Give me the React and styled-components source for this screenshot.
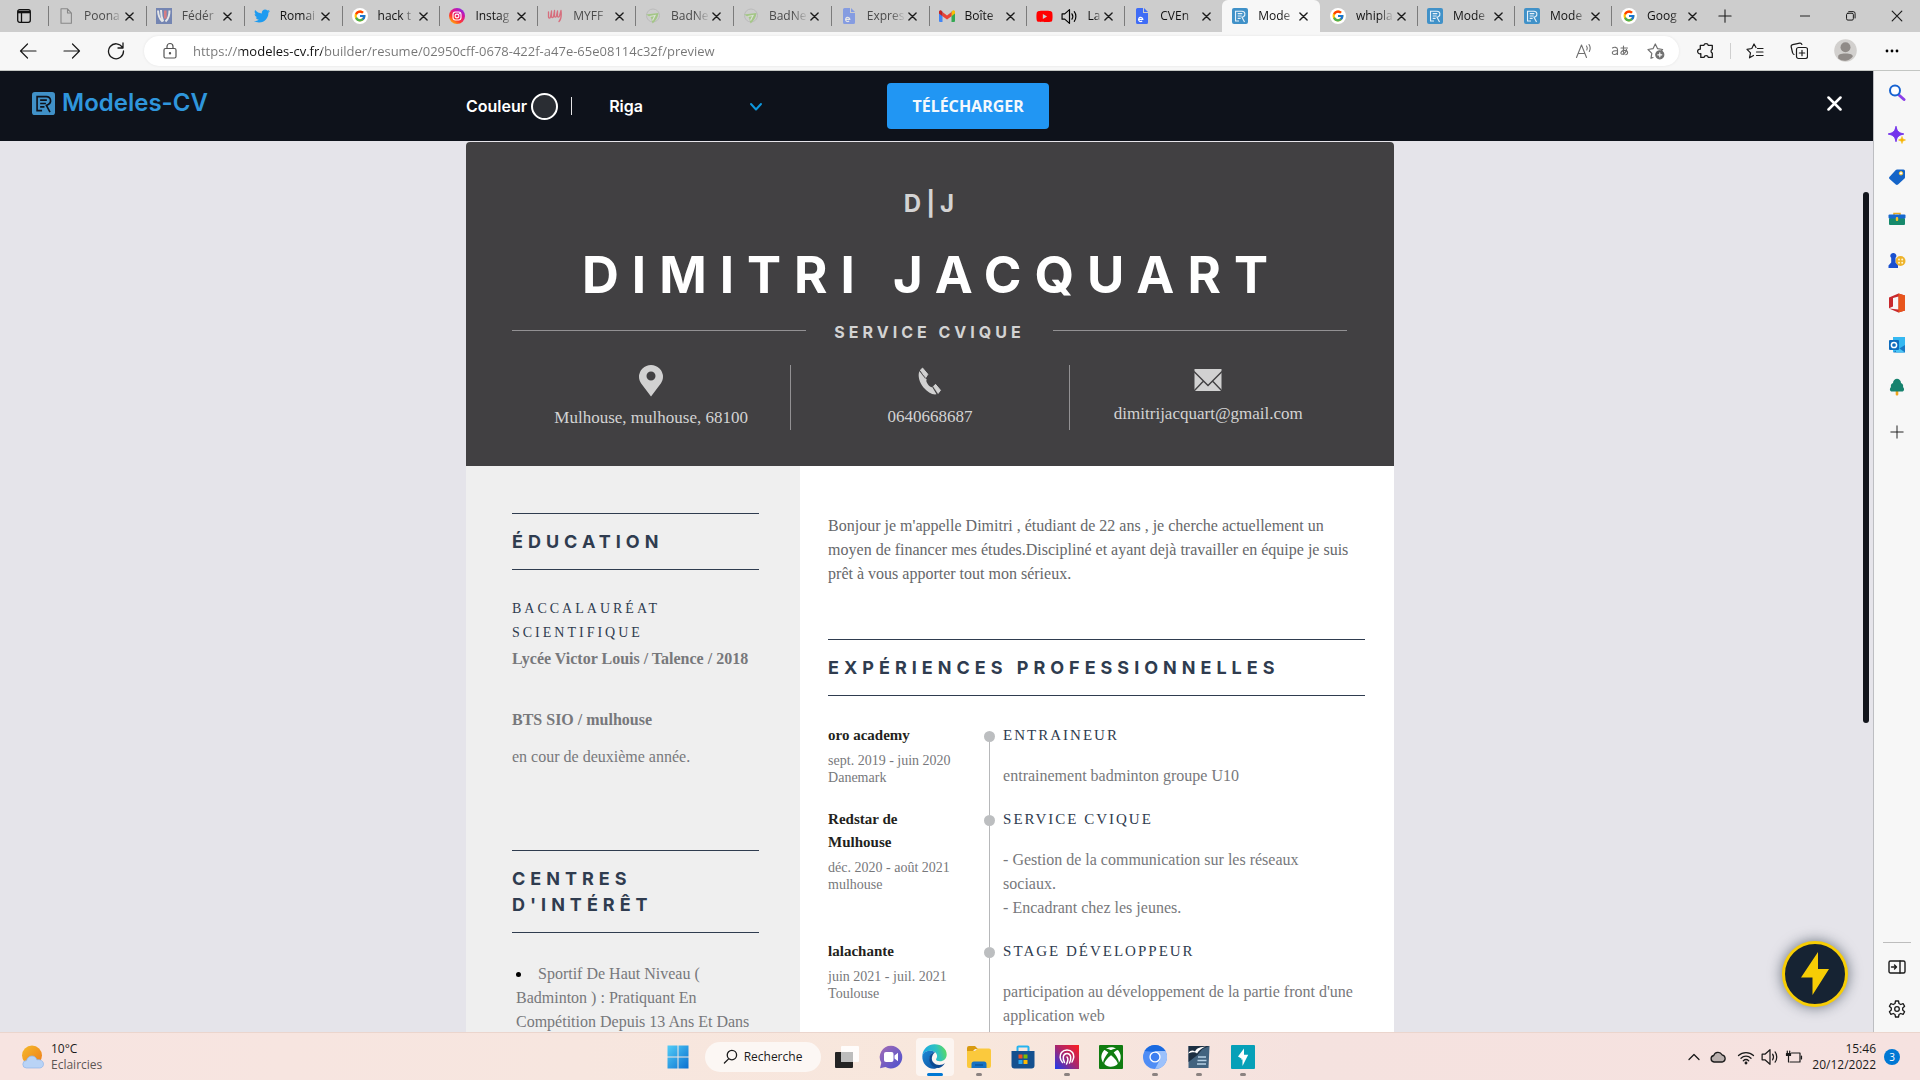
import React from "react";
import styled, { createGlobalStyle, css } from "styled-components";
import { FcGoogle } from "react-icons/fc";
import { FaTwitter, FaYoutube, FaXbox } from "react-icons/fa";

const ui = `"Open Sans", "Noto Sans", sans-serif`;
const display = `Inter, "Liberation Sans", sans-serif`;
const serif = `"Liberation Serif", serif`;
const navy = "#2f3c4f";

const GlobalStyle = createGlobalStyle`
  * { box-sizing: border-box; }
  html, body, #root { height: 100%; }
  body { margin: 0; overflow: hidden; font-family: ${ui}; }
  h1, h2, h3, h4, p, ul { margin: 0; padding: 0; font-weight: inherit; font-size: inherit; }
  button { border: 0; padding: 0; background: none; color: inherit; font: inherit; cursor: pointer; }
  svg { display: block; flex: none; }
`;

const Screen = styled.div`
  display: flex;
  flex-direction: column;
  height: 100vh;
  background: #f7f7f7;
`;

/* ---------- tab strip ---------- */

const TabStrip = styled.div`
  display: flex;
  flex: none;
  height: 32px;
  background: #cdcdcd;
`;

const TabActions = styled.div`
  display: flex;
  flex: none;
  align-items: center;
  justify-content: center;
  width: 48px;
`;

const TabList = styled.div`
  display: flex;
  flex: 1;
  min-width: 0;
`;

const TabItem = styled.div`
  display: flex;
  flex: ${(p) => (p.$recent ? 97 : 98)} 1 0;
  min-width: 0;
  align-items: center;
  padding: 0 9px 0 10px;
  position: relative;
  ${(p) =>
    p.$active
      ? css`
          background: #f7f7f7;
          border-radius: 6px 6px 0 0;
        `
      : css`
          &::before {
            content: "";
            position: absolute;
            left: 0;
            top: 6px;
            width: 1px;
            height: 20px;
            background: ${p.$plain ? "transparent" : "#7b7b7b"};
          }
        `}
`;

const TabIcon = styled.span`
  display: grid;
  place-items: center;
  flex: none;
  width: 16px;
  height: 16px;
  opacity: ${(p) => (p.$faded ? 0.5 : 1)};
`;

const TabSound = styled.span`
  flex: none;
  margin-left: 9px;
`;

const TabTitle = styled.span`
  flex: 1;
  min-width: 0;
  margin-left: ${(p) => (p.$sound ? 9 : 10)}px;
  overflow: hidden;
  white-space: nowrap;
  font-size: 12px;
  line-height: 18px;
  color: ${(p) => (p.$faded ? "#4a4a4a" : "#111")};
  mask-image: linear-gradient(90deg, #000 60%, transparent 100%);
`;

const IconButton = styled.button`
  display: grid;
  place-items: center;
  flex: none;
  width: ${(p) => p.$w || 16}px;
  height: ${(p) => p.$h || 16}px;
  color: ${(p) => p.$color || "#1b1b1b"};
`;

const WindowControls = styled.div`
  display: flex;
  flex: none;
  align-items: stretch;
  width: 212px;
`;

const ControlSpacer = styled.div`
  flex: 1;
`;

/* ---------- toolbar ---------- */

const Toolbar = styled.div`
  display: flex;
  flex: none;
  align-items: center;
  height: 39px;
  padding: 0 5px 1px 6px;
  border-bottom: 1px solid #c3c6c3;
  background: #f7f7f7;
`;

const NavButtons = styled.div`
  display: flex;
  flex: none;
  width: 138px;
`;

const AddressBar = styled.div`
  display: flex;
  flex: 1;
  align-items: center;
  min-width: 0;
  height: 30px;
  padding: 0 5px 0 17px;
  border-radius: 15px;
  background: #fff;
  box-shadow: 0 0 3px rgba(0, 0, 0, 0.08);
`;

const AddressInput = styled.input`
  flex: 1;
  min-width: 0;
  height: 26px;
  margin-left: 14px;
  padding: 0;
  border: 0;
  outline: 0;
  font-family: ${ui};
  font-size: 13px;
  color: transparent;
  caret-color: #111;
  background: linear-gradient(90deg, #757575 47px, #111 47px, #111 129px, #757575 129px);
  background-clip: text;
`;

const ToolbarActions = styled.div`
  display: flex;
  flex: none;
  align-items: center;
  padding-left: 5px;
`;

const ToolbarDivider = styled.span`
  width: 1px;
  height: 16px;
  margin: 0 2px;
  background: #cfcfcf;
`;

/* ---------- page ---------- */

const Middle = styled.div`
  display: flex;
  flex: 1;
  min-height: 0;
`;

const Page = styled.main`
  position: relative;
  display: flex;
  flex: 1;
  flex-direction: column;
  min-width: 0;
  background: #e5e4ea;
`;

const AppHeader = styled.header`
  display: grid;
  grid-template-columns: 1fr minmax(0, 928px) 1fr;
  align-items: center;
  flex: none;
  height: 70px;
  padding-right: 13px;
  background: #0e121b;
  color: #fff;
  font-family: ${display};
`;

const Brand = styled.a`
  display: flex;
  align-items: center;
  gap: 7px;
  padding: 0 0 6px 32px;
  color: #2f96dc;
  font-size: 24px;
  font-weight: 600;
  line-height: 30px;
  text-decoration: none;
`;

const Controls = styled.div`
  display: flex;
  align-items: center;
  font-size: 16px;
  font-weight: 600;
  line-height: 20px;
`;

const ColorButton = styled.button`
  display: flex;
  align-items: center;
  gap: 4px;
`;

const Swatch = styled.span`
  width: 27px;
  height: 27px;
  border: 2px solid #fff;
  border-radius: 50%;
  background: #2a2d33;
`;

const ControlDivider = styled.span`
  width: 1px;
  height: 18px;
  margin: 0 37px 0 13px;
  background: #e4e4e6;
`;

const SelectBox = styled.label`
  position: relative;
  display: block;
  width: 154px;

  svg {
    position: absolute;
    right: 0;
    top: 4px;
    pointer-events: none;
  }
`;

const TemplateSelect = styled.select`
  width: 100%;
  padding: 0;
  border: 0;
  appearance: none;
  background: transparent;
  color: #fff;
  font: inherit;
`;

const DownloadButton = styled.button`
  width: 162px;
  height: 46px;
  margin-left: 124px;
  border-radius: 4px;
  background: #2196f3;
  color: #f4f8fc;
  font-family: "Noto Sans", sans-serif;
  font-size: 16px;
  font-weight: 700;
`;

const CloseBox = styled.div`
  display: flex;
  justify-content: flex-end;
  padding: 0 18px 6px 0;
`;

const Scroller = styled.div`
  display: flex;
  flex: 1;
  min-height: 0;
`;

const Canvas = styled.div`
  flex: 1;
  min-width: 0;
  padding-top: 1px;
  overflow: hidden;
`;

const ScrollTrack = styled.div`
  flex: none;
  width: 13px;
  padding: 51px 0 0 3px;
`;

const ScrollThumb = styled.div`
  width: 6px;
  height: 64%;
  min-height: 40px;
  max-height: 531px;
  border-radius: 3px;
  background: #12151c;
`;

const BoltButton = styled.button`
  position: absolute;
  right: 25px;
  bottom: 25px;
  display: grid;
  place-items: center;
  width: 66px;
  height: 66px;
  border: 3px solid #f7cd05;
  border-radius: 50%;
  background: #162333;
  box-shadow: 0 0 14px rgba(22, 35, 51, 0.6);
`;

/* ---------- resume ---------- */

const Resume = styled.article`
  max-width: 928px;
  margin: 0 auto;
  border-radius: 4px 4px 0 0;
  overflow: hidden;
  background: #fff;
`;

const ResumeHeader = styled.header`
  padding: 47px 47px 37px 46px;
  background: #414042;
  color: #d3d3d3;
  text-align: center;
`;

const Initials = styled.p`
  padding-left: 4px;
  font-family: ${display};
  font-size: 24px;
  font-weight: 700;
  line-height: 30px;
  letter-spacing: 5px;
`;

const Name = styled.h1`
  margin-top: 25px;
  padding-left: 4px;
  color: #fff;
  font-family: ${display};
  font-size: 51px;
  font-weight: 700;
  line-height: 62px;
  letter-spacing: 13px;
`;

const RoleRow = styled.div`
  display: flex;
  align-items: center;
  gap: 28px;
  margin-top: 12px;

  &::before,
  &::after {
    content: "";
    flex: 1;
    height: 1px;
    background: #929193;
  }
`;

const Role = styled.h2`
  padding-top: 4px;
  font-family: ${display};
  font-size: 16px;
  font-weight: 700;
  line-height: 20px;
  letter-spacing: 4px;
`;

const Contacts = styled.div`
  display: grid;
  grid-template-columns: repeat(3, 1fr);
  height: 64px;
  margin-top: 23px;
`;

const Contact = styled.div`
  display: flex;
  flex-direction: column;
  align-items: center;
  gap: 9px;
  font-family: ${serif};
  font-size: 17px;
  line-height: 24px;

  & + & {
    border-left: 1px solid #929193;
  }
`;

const Columns = styled.div`
  display: grid;
  grid-template-columns: 36% 1fr;
`;

const Aside = styled.div`
  padding: 47px 41px 47px 46px;
  background: #efefef;
  color: #77787b;
  font-family: ${serif};
  font-size: 16px;
  line-height: 24px;
`;

const Main = styled.div`
  padding: 48px 29px 47px 28px;
  color: #77787b;
  font-family: ${serif};
  font-size: 16px;
  line-height: 24px;
`;

const SectionTitle = styled.h2`
  padding: 15px 0 14px;
  border-top: 1px solid ${navy};
  border-bottom: 1px solid ${navy};
  color: ${navy};
  font-family: ${display};
  font-size: 18px;
  font-weight: 700;
  line-height: 26px;
  letter-spacing: 5px;
`;

const Degree = styled.h3`
  margin: 27px 0 2px;
  color: ${navy};
  font-size: 14px;
  letter-spacing: 3px;
`;

const School = styled.h4`
  margin-bottom: ${(p) => p.$after}px;
  font-weight: 700;
`;

const Interests = styled.ul`
  margin-top: 29px;
  padding-left: 4px;
  list-style: disc inside;

  li::marker {
    color: #000;
  }
`;

const Education = styled.section`
  padding-bottom: 81px;
`;

const Intro = styled.p`
  margin-bottom: 53px;
  color: #66676a;
`;

const Jobs = styled.div`
  margin-top: 28px;
`;

const Job = styled.section`
  display: grid;
  grid-template-columns: 156px 11px 1fr;
`;

const JobMeta = styled.div`
  padding: 0 28px 20px 0;
  font-size: 14px;
  line-height: 17px;
`;

const Company = styled.h3`
  margin-bottom: 5px;
  color: #231f20;
  font-size: 15px;
  font-weight: 700;
  line-height: 23px;
`;

const Rail = styled.div`
  display: flex;
  flex-direction: column;
  align-items: center;
`;

const RailLine = styled.span`
  flex: ${(p) => (p.$lead ? "0 0 7px" : "1")};
  width: 1px;
  background: ${(p) => (p.$hidden ? "transparent" : "#b7b8ba")};
`;

const RailDot = styled.span`
  width: 11px;
  height: 11px;
  border-radius: 50%;
  background: #bcbec0;
`;

const JobBody = styled.div`
  padding: 0 0 20px 8px;
`;

const JobTitle = styled.h3`
  margin-bottom: 17px;
  color: ${navy};
  font-size: 15px;
  line-height: 23px;
  letter-spacing: 2px;
`;

/* ---------- browser side panel ---------- */

const SidePanel = styled.aside`
  display: flex;
  flex: none;
  flex-direction: column;
  align-items: center;
  width: 47px;
  padding: 1px 0 2px;
  border-left: 1px solid #bdbec2;
  background: #f7f7f7;
`;

const PanelDivider = styled.span`
  width: 28px;
  height: 1px;
  margin: auto 0 3px;
  background: #bdbdbd;
`;

/* ---------- taskbar ---------- */

const Taskbar = styled.footer`
  display: grid;
  grid-template-columns: 1fr auto 1fr;
  align-items: center;
  flex: none;
  height: 48px;
  border-top: 1px solid #ebd5cd;
  background: linear-gradient(90deg, #f7e4e1 0%, #f7e6df 30%, #f8e7dc 50%, #f5e2df 68%, #f6e2e0 100%);
  color: #1b1b1b;
  font-size: 12px;
  line-height: 16px;
`;

const Weather = styled.button`
  display: flex;
  align-items: center;
  gap: 7px;
  padding-left: 21px;
  text-align: left;
`;

const Muted = styled.span`
  display: block;
  color: #5c5654;
`;

const Apps = styled.div`
  display: flex;
  align-items: center;
`;

const AppCell = styled.button`
  position: relative;
  display: grid;
  place-items: center;
  width: 38px;
  height: 38px;
  margin: 0 3px;
  border-radius: 4px;
  background: ${(p) => (p.$active ? "rgba(255,255,255,0.6)" : "transparent")};

  &::after {
    content: "";
    position: absolute;
    bottom: 0;
    left: 50%;
    width: ${(p) => (p.$active ? 16 : 6)}px;
    height: 3px;
    margin-left: ${(p) => (p.$active ? -8 : -3)}px;
    border-radius: 2px;
    background: ${(p) => (p.$active ? "#0078d4" : p.$open ? "#8b8280" : "transparent")};
  }
`;

const SearchPill = styled.button`
  display: flex;
  align-items: center;
  justify-content: center;
  gap: 6px;
  width: 116px;
  height: 30px;
  margin: 0 4px 0 5px;
  border-radius: 15px;
  background: #fcf7f4;
`;

const Tray = styled.div`
  display: flex;
  align-items: center;
  justify-content: flex-end;
  gap: 6px;
  padding-right: 20px;
`;

const TrayGroup = styled.span`
  display: flex;
  gap: 6px;
  margin-right: 4px;
`;

const Clock = styled.time`
  margin-left: 3px;
  text-align: right;
`;

const Badge = styled.span`
  display: grid;
  place-items: center;
  width: 16px;
  height: 16px;
  margin-left: 2px;
  border-radius: 50%;
  background: #0078d4;
  color: #fff;
  font-size: 10px;
`;

/* ---------- drawings ---------- */

const Stroke = ({ s = 16, w = 1.2, vb = 16, children, ...rest }) => (
  <svg width={s} height={s} viewBox={`0 0 ${vb} ${vb}`} fill="none" stroke="currentColor" strokeWidth={w} strokeLinecap="round" strokeLinejoin="round" {...rest}>
    {children}
  </svg>
);

const Cross = ({ s = 8, w = 1.5 }) => (
  <Stroke s={s} w={w} vb={10}><path d="M1 1l8 8M9 1l-8 8" /></Stroke>
);

const DocIcon = () => (
  <Stroke s={16} w={1.1} stroke="#444"><path d="M3 .8h6.500L13.400 5v10.200H3zM9.500.8V5h4" /></Stroke>
);

const FedIcon = () => (
  <svg width="16" height="16" viewBox="0 0 16 16">
    <rect width="16" height="16" fill="#1d3f99" />
    <path d="M2 2.500c.2 5 1.500 8.500 4.500 11M5 2c0 5 .8 8.500 2.200 11.500M13.500 2.500c0 5-1.200 8.500-4 11" stroke="#fff" strokeWidth="2" fill="none" />
    <path d="M9.300 2.500v8" stroke="#e2303a" strokeWidth="2.600" />
  </svg>
);

const GoogleIcon = () => (
  <svg width="16" height="16" viewBox="0 0 16 16">
    <circle cx="8" cy="8" r="8" fill="#fff" />
    <g transform="translate(1.500 1.500)"><FcGoogle size={13} /></g>
  </svg>
);

const InstaIcon = () => (
  <svg width="16" height="16" viewBox="0 0 16 16">
    <defs>
      <linearGradient id="insta" x1="0.1" y1="1" x2="0.8" y2="0">
        <stop offset="0" stopColor="#ffd000" /><stop offset="0.35" stopColor="#ff3b30" />
        <stop offset="0.7" stopColor="#d9149a" /><stop offset="1" stopColor="#7a2cf3" />
      </linearGradient>
    </defs>
    <circle cx="8" cy="8" r="8" fill="url(#insta)" />
    <rect x="4" y="4" width="8" height="8" rx="2.400" fill="none" stroke="#fff" strokeWidth="1.100" />
    <circle cx="8" cy="8" r="1.900" fill="none" stroke="#fff" strokeWidth="1.100" />
    <circle cx="10.400" cy="5.600" r=".6" fill="#fff" />
  </svg>
);

const MyffIcon = () => (
  <Stroke s={16} w={1.3} stroke="#e0122f"><path d="M1.500 4v5c0 1.500 1.500 1.500 2 0l1-6v5.500c0 1.500 1.500 1.500 2 0l1-6V8c0 1.500 1.500 1.500 2 0l1-5v5c0 1.500 1.500 1.500 2 0l1.500-5.500c.5 4 0 9-2 11" /></Stroke>
);

const BadIcon = () => (
  <svg width="16" height="16" viewBox="0 0 16 16" fill="none">
    <circle cx="8" cy="7.500" r="6.500" stroke="#a8a8a8" strokeWidth="1" />
    <path d="M1 6.500c4-.5 8-1 12.500-1.500C13 9 11 13 7.500 15.500L6 9.500z" fill="#7cc142" />
    <path d="M4.500 8.500L10 7.500l-2.500 5" stroke="#e9f5df" strokeWidth="1.200" />
  </svg>
);

const EdgeDocIcon = () => (
  <svg width="16" height="16" viewBox="0 0 16 16">
    <path d="M3.500 0H9v5h5v9.500A1.500 1.500 0 0 1 12.500 16h-9A1.500 1.500 0 0 1 2 14.500v-13A1.500 1.500 0 0 1 3.500 0z" fill="#3f6cf6" />
    <path d="M10 0l4 4h-4z" fill="#3f6cf6" />
    <path d="M4.600 11.300h4.200a2.100 2.100 0 1 0-.7 1.700" stroke="#fff" strokeWidth="1.200" fill="none" />
  </svg>
);

const GmailIcon = () => (
  <svg width="16" height="16" viewBox="0 0 16 16">
    <path d="M0 3.500h3.500V14H1a1 1 0 0 1-1-1z" fill="#4285f4" />
    <path d="M12.500 3.500H16V13a1 1 0 0 1-1 1h-2.500z" fill="#34a853" />
    <path d="M12.500 4l1.200-1.500C15 1.800 16 2.600 16 4v1.500l-3.500 2.700z" fill="#fbbc04" />
    <path d="M3.500 8.200V4L8 7.400 12.500 4v4.200L8 11.600z" fill="#ea4335" />
    <path d="M0 5.500V4c0-1.400 1-2.200 2.300-1.500L3.500 4v4.200z" fill="#c5221f" />
  </svg>
);

const LogoIcon = ({ s = 16, ink = "#e6f1fa" }) => (
  <svg width={s} height={s} viewBox="0 0 24 24">
    <rect width="24" height="24" rx="3" fill="#4091c8" />
    <g fill="none" stroke={ink} strokeWidth="1.700">
      <path d="M4.500 19.500h6M5.300 20V4.800h9.700c5 0 5.800 6.500 2 8.200l-2 1 3.800 7" />
      <path d="M8.500 8.500h7M8.500 12h6M8.500 15.500h4.500" />
    </g>
  </svg>
);

const SoundIcon = ({ s = 16 }) => (
  <Stroke s={s} w={1.1}><path d="M1 5.500h2.500L8 1.500v13L3.500 10.500H1zM10.300 5.500c1 1.500 1 3.500 0 5M12.500 3.500c2 2.500 2 6.500 0 9" /></Stroke>
);

const PinIcon = () => (
  <svg width="32" height="32" viewBox="0 0 32 32">
    <path fillRule="evenodd" d="M16 0a12 12 0 0 0-12 12c0 2.500 1 4.600 2.200 6.500L16 31.500l9.800-13C27 16.600 28 14.500 28 12A12 12 0 0 0 16 0zm0 6.500a4.500 4.500 0 1 1 0 9 4.500 4.500 0 0 1 0-9z" fill="#d1d1d1" />
  </svg>
);

const PhoneIcon = () => (
  <svg width="30" height="31" viewBox="0 0 30 31">
    <path d="M4.400 6C2.500 11 4.500 17.500 8.500 22.500c4 4.600 8.500 7.500 13 6.800l-4.300-7.200c-1.200.2-2.700-.8-4.200-2.700-1.600-2.100-2.100-3.700-1.300-4.800z" fill="#d1d1d1" />
    <path d="M5.300 5.200l2.300-2.100 5.200 6.200-2 3.200zM18.300 21.600l2.200-2.300 5 6-2.500 3.200z" fill="#d1d1d1" stroke="#d1d1d1" strokeLinejoin="round" />
    <path d="M4.600 5.900l5.700 7.600M17.700 21.500l4.800 7.300" stroke="#414042" strokeWidth=".6" />
  </svg>
);

const MailIcon = () => (
  <svg width="28" height="28" viewBox="0 0 28 28">
    <rect x=".5" y="4" width="27" height="22" fill="#d1d1d1" />
    <path d="M0 6.500l14 14 14-14M0 26l9.500-10M28 26l-9.500-10" stroke="#414042" strokeWidth="1.400" fill="none" />
  </svg>
);

const SideSearch = () => (
  <svg width="18" height="18" viewBox="0 0 18 18" fill="none">
    <path d="M11.500 11.500l4.500 4" stroke="#8b3fe8" strokeWidth="3" strokeLinecap="round" />
    <circle cx="7" cy="6.500" r="5" fill="#fff" stroke="#1763d1" strokeWidth="2" />
  </svg>
);
const SideSpark = () => (
  <svg width="18" height="18" viewBox="0 0 18 18">
    <path d="M8 .3c.9 4.600 2.500 6.500 7.800 7.700C10.500 9.200 8.900 11 8 15.700 7.100 11 5.500 9.200.2 8 5.500 6.800 7.100 4.900 8 .3z" fill="#7433ec" stroke="#7433ec" strokeLinejoin="round" />
    <path d="M14 10.500c.4 2.200 1 3 3.500 3.500-2.500.5-3.100 1.300-3.500 3.500-.4-2.200-1-3-3.500-3.500 2.500-.5 3.100-1.300 3.500-3.500z" fill="#f7b500" stroke="#f7b500" strokeWidth=".6" />
  </svg>
);
const SideTag = () => (
  <svg width="18" height="18" viewBox="0 0 18 18">
    <path d="M9 1.500h6.500A1.500 1.500 0 0 1 17 3v6.200c0 .5-.2.900-.5 1.200L10 16.500c-.7.600-1.500.6-2.200 0L1.600 11c-.7-.7-.7-1.600 0-2.200L7.800 2c.3-.3.700-.5 1.200-.5z" fill="#1464c8" />
    <circle cx="13" cy="5.300" r="1.700" fill="#fff" stroke="#f7c32e" strokeWidth="1" />
  </svg>
);
const SideBox = () => (
  <svg width="18" height="18" viewBox="0 0 18 18">
    <path d="M6 5V3.500h6V5" stroke="#e8a81e" strokeWidth="1.500" fill="none" />
    <rect x="1" y="8" width="16" height="7" rx="1" fill="#16896b" />
    <rect x=".5" y="4.500" width="17" height="4" rx="1" fill="#1668cf" />
    <rect x="7.800" y="7" width="2.400" height="4" rx="1" fill="#f7c32e" />
  </svg>
);
const SideGames = () => (
  <svg width="18" height="18" viewBox="0 0 18 18">
    <circle cx="12.500" cy="9" r="5" fill="#eeb32b" />
    <g fill="#fff6cf"><circle cx="11" cy="7.500" r="1" /><circle cx="14.200" cy="7.500" r="1" /><circle cx="11" cy="10.700" r="1" /><circle cx="14.200" cy="10.700" r="1" /></g>
    <path d="M5.500 1a2.800 2.800 0 0 1 2 4.800v4.700l2.500 3V16H.5v-2.500l2.700-3V5.800A2.800 2.800 0 0 1 5.500 1z" fill="#1a50cf" />
  </svg>
);
const SideOffice = () => (
  <svg width="20" height="20" viewBox="0 0 20 20">
    <path d="M2 4.500L11.500.500 18 2.500v15L11.500 19.500 2 15.500l9.500 1V3.500L6 5v8.500l-4 1.800z" fill="#c8292d" />
    <path d="M11.500.5L18 2.500v15l-6.500 2z" fill="#e8551c" />
  </svg>
);
const SideOutlook = () => (
  <svg width="18" height="18" viewBox="0 0 18 18">
    <rect x="5" y="1" width="12" height="15" fill="#35b8f1" />
    <path d="M5 16.500L17 9v7.500z" fill="#1a79c4" /><path d="M17 16.500L8 10v6.500z" fill="#4ac5f7" />
    <rect x="1" y="4" width="10" height="10" rx="1" fill="#0f6cbd" />
    <circle cx="6" cy="9" r="2.600" fill="none" stroke="#fff" strokeWidth="1.500" />
  </svg>
);
const SideTree = () => (
  <svg width="18" height="18" viewBox="0 0 18 18">
    <rect x="7.700" y="12" width="2.600" height="5.500" rx="1" fill="#f2a51c" />
    <path d="M9 .8c2 0 4 2 4 4.200 2 1 2.500 2.500 2 4 1.800 1.700 1.300 4.500-1 4.500H4c-2.300 0-2.800-2.800-1-4.500-.5-1.500 0-3 2-4C5 2.800 7 .8 9 .8z" fill="#17826e" />
  </svg>
);

const WeatherIcon = () => (
  <svg width="23" height="24" viewBox="0 0 23 24">
    <defs><linearGradient id="sun" x1="0" y1="0" x2="1" y2="1"><stop offset="0" stopColor="#f5bb2b" /><stop offset="1" stopColor="#ee7b1a" /></linearGradient></defs>
    <circle cx="11" cy="10.500" r="10" fill="url(#sun)" />
    <path d="M5.500 23a3.700 3.700 0 0 1 0-7.400c.8-3 2.800-4.600 5.500-4.600 2.500 0 4.200 1.500 4.900 3.800 3-.7 6.600 1 6.600 4.300 0 2.500-1.800 3.900-4 3.900z" fill="#b9d3f6" stroke="#8fb4ea" strokeWidth=".7" />
  </svg>
);

const WindowsIcon = () => (
  <svg width="24" height="24" viewBox="0 0 24 24">
    <defs><linearGradient id="win" x1="0" y1="0" x2="1" y2="1"><stop offset="0" stopColor="#52cdf7" /><stop offset="1" stopColor="#0a6fd0" /></linearGradient></defs>
    <path d="M1.500.5h10v11h-10zM12.500.5h10v11h-10zM1.500 12.500h10v11h-10zM12.500 12.500h10v11h-10z" fill="url(#win)" />
  </svg>
);
const TaskViewIcon = () => (
  <svg width="24" height="24" viewBox="0 0 24 24">
    <rect x="0" y="7" width="18" height="16" rx="1" fill="#232323" />
    <rect x="6" y="1" width="18" height="16" rx="1" fill="#fff" opacity=".88" />
    <rect x="6" y="7" width="12" height="10" fill="#bdbdbd" />
  </svg>
);
const ChatIcon = () => (
  <svg width="24" height="24" viewBox="0 0 24 24">
    <defs><linearGradient id="chat" x1="0" y1="0" x2="1" y2="1"><stop offset="0" stopColor="#a46cb5" /><stop offset="1" stopColor="#4a50cf" /></linearGradient></defs>
    <path d="M12 .8a11.300 11.300 0 1 1-5.500 21.200L1 23.300l1.300-5.500A11.300 11.300 0 0 1 12 .8z" fill="url(#chat)" />
    <rect x="5" y="7" width="9.500" height="10" rx="2" fill="#fff" /><path d="M15.500 10.500l3.500-2.700v8.400l-3.500-2.700z" fill="#fff" />
  </svg>
);
const EdgeIcon = () => (
  <svg width="25" height="25" viewBox="0 0 24 24">
    <defs>
      <linearGradient id="edgeTop" x1="0" y1="0.500" x2="1" y2="0.300"><stop offset="0" stopColor="#1aa7e8" /><stop offset="0.600" stopColor="#2fc2c0" /><stop offset="1" stopColor="#5ddb5c" /></linearGradient>
      <linearGradient id="edgeLow" x1="0" y1="0" x2="1" y2="1"><stop offset="0" stopColor="#1b88d6" /><stop offset="1" stopColor="#0c4f9e" /></linearGradient>
    </defs>
    <path d="M.3 11C1 4.500 6 .3 12 .3c7 0 11.700 4.800 11.700 9.700 0 4-3 6.500-6.500 6.500-2.700 0-3.700-1-3.700-1.700 0-.8 1-1.300 1-3.300 0-2.800-2.700-5-6.500-5C4.500 6.500 1.500 8.300.3 11z" fill="url(#edgeTop)" />
    <path d="M.3 11.500C1 8.300 4.500 6.500 8 6.500c2 0 3.500.6 4.600 1.500C9.500 8.300 7.500 11 7.500 14c0 4.500 4 8 8.500 8-1.500 1-3 1.700-5 1.700C5 23.700 0 18.500.3 11.500z" fill="url(#edgeLow)" />
    <path d="M9.500 13c-.7 4 3 7.200 7 7.200 2.500 0 4.500-1 5.500-1.700-1.500 2.500-4 4.500-6 4.500-5 0-9-3.500-9-8.500 0-2.500 1.200-4.800 3.500-6 .5-.3 1.500-.4 2.100-.3C11 9 9.800 11 9.500 13z" fill="#0d4a91" />
  </svg>
);
const FolderIcon = () => (
  <svg width="24" height="24" viewBox="0 0 24 24">
    <path d="M0 3a2 2 0 0 1 2-2h6l3 3h-3L6 6H0z" fill="#d99a10" />
    <path d="M0 6h8l2.500-2.500H22a2 2 0 0 1 2 2V21a2 2 0 0 1-2 2H2a2 2 0 0 1-2-2z" fill="#fbc93d" />
    <path d="M4.500 23v-4a2.500 2.500 0 0 1 2.500-2.500h10a2.500 2.500 0 0 1 2.500 2.500v4z" fill="#1672c4" /><path d="M8 20h8" stroke="#0d4f91" strokeWidth="1.200" />
  </svg>
);
const StoreIcon = () => (
  <svg width="24" height="24" viewBox="0 0 24 24">
    <path d="M6.500 6V2.500c0-.6.400-1 1-1h9c.6 0 1 .4 1 1V6" stroke="#25b4f0" strokeWidth="2" fill="none" />
    <path d="M.5 6h23v14.500a3 3 0 0 1-3 3h-17a3 3 0 0 1-3-3z" fill="#14508f" />
    <path d="M7.500 9.500h4v4h-4z" fill="#f25022" /><path d="M12.500 9.500h4v4h-4z" fill="#7fba00" /><path d="M7.500 15h4v4h-4z" fill="#2ba7ef" /><path d="M12.500 15h4v4h-4z" fill="#ffb900" />
  </svg>
);
const FingerIcon = () => (
  <svg width="24" height="24" viewBox="0 0 24 24">
    <defs><linearGradient id="finger" x1="0" y1="1" x2="1" y2="0"><stop offset="0" stopColor="#1b3cf0" /><stop offset="0.500" stopColor="#a8266f" /><stop offset="1" stopColor="#ff1f1f" /></linearGradient></defs>
    <rect width="24" height="24" fill="url(#finger)" />
    <path d="M7.500 17.500c-3-3-3-7.500-1-10 2.800-3.500 8.500-3.300 11 0 1.500 2.200 1.500 6-.5 9.500M9.500 17.500C7.500 14 7.500 8.500 12 8.500s4.500 5.500 2.500 9.500M12 12c1.500 1.500.5 5-.5 7" stroke="#fff" strokeWidth="1.500" fill="none" strokeLinecap="round" />
  </svg>
);
const XboxIcon = () => (
  <svg width="24" height="24" viewBox="0 0 24 24">
    <rect width="24" height="24" rx="1" fill="#107c10" />
    <g transform="translate(2 2)" color="#fff"><FaXbox size={20} /></g>
  </svg>
);
const ChromiumIcon = () => (
  <svg width="24" height="24" viewBox="0 0 24 24">
    <circle cx="12" cy="12" r="12" fill="#4f8df5" />
    <path d="M1.600 6A12 12 0 0 1 22.400 6L12 7z" fill="#1a6ae0" />
    <path d="M22.400 6A12 12 0 0 1 12 24l5-9.500L12 6z" fill="#9cc1fb" />
    <circle cx="12" cy="12" r="5.600" fill="#fff" /><circle cx="12" cy="12" r="4.300" fill="#3c7ff0" />
  </svg>
);
const WriterIcon = () => (
  <svg width="24" height="24" viewBox="0 0 24 24">
    <path d="M1.500 1h21l-1 22h-20z" fill="#42637f" />
    <path d="M1.500 1h21l-7 3-5 6-9 7z" fill="#1c2f42" />
    <path d="M1 8.500c3-4 5-3 7-2 2-4 6-4.500 11-5-4.500 1.500-7 4-9 7-3-2-5-1-9 0z" fill="#fff" />
    <path d="M11 12h8M10.500 15.500h9M10 19h9" stroke="#b8d2e6" strokeWidth="1.500" />
  </svg>
);
const BurpIcon = () => (
  <svg width="24" height="24" viewBox="0 0 24 24">
    <rect width="24" height="24" rx="1" fill="#06a0b8" />
    <path d="M13 3.500v6.300h4.200L10.500 15v-1.500L7 11.500zM17.200 9.800L11.500 21v-6.500l-4-3h6z" fill="#fff" />
  </svg>
);

/* ---------- data ---------- */

const tabs = [
  { title: "Poona", icon: <DocIcon />, faded: true },
  { title: "Fédér", icon: <FedIcon />, faded: true },
  { title: "Romai", icon: <FaTwitter size={16} color="#1d9bf0" /> },
  { title: "hack t", icon: <GoogleIcon /> },
  { title: "Instag", icon: <InstaIcon /> },
  { title: "MYFF", icon: <MyffIcon />, faded: true },
  { title: "BadNe", icon: <BadIcon />, faded: true },
  { title: "BadNe", icon: <BadIcon />, faded: true },
  { title: "Expres", icon: <EdgeDocIcon />, faded: true },
  { title: "Boîte", icon: <GmailIcon /> },
  { title: "La", icon: <FaYoutube size={17} color="#f00" />, sound: true },
  { title: "CVEn", icon: <EdgeDocIcon /> },
  { title: "Mode", icon: <LogoIcon />, active: true },
  { title: "whipla", icon: <GoogleIcon />, plain: true, recent: true },
  { title: "Mode", icon: <LogoIcon />, recent: true },
  { title: "Mode", icon: <LogoIcon />, recent: true },
  { title: "Goog", icon: <GoogleIcon />, recent: true },
];

const contacts = [
  { icon: <PinIcon />, text: "Mulhouse, mulhouse, 68100" },
  { icon: <PhoneIcon />, text: "0640668687" },
  { icon: <MailIcon />, text: "dimitrijacquart@gmail.com" },
];

const jobs = [
  {
    company: "oro academy", dates: "sept. 2019 - juin 2020", place: "Danemark",
    title: "ENTRAINEUR", lines: ["entrainement badminton groupe U10"],
  },
  {
    company: "Redstar de Mulhouse", dates: "déc. 2020 - août 2021", place: "mulhouse",
    title: "SERVICE CVIQUE",
    lines: ["- Gestion de la communication sur les réseaux", "sociaux.", "- Encadrant chez les jeunes."],
  },
  {
    company: "lalachante", dates: "juin 2021 - juil. 2021", place: "Toulouse",
    title: "STAGE DÉVELOPPEUR",
    lines: ["participation au développement de la partie front d'une application web"],
  },
];

const sideTools = [
  ["Rechercher", <SideSearch />], ["Découvrir", <SideSpark />], ["Achats", <SideTag />], ["Outils", <SideBox />],
  ["Jeux", <SideGames />], ["Office", <SideOffice />], ["Outlook", <SideOutlook />], ["Arbre", <SideTree />],
];

const apps = [
  { name: "Vue des tâches", icon: <TaskViewIcon /> },
  { name: "Conversation", icon: <ChatIcon /> },
  { name: "Edge", icon: <EdgeIcon />, active: true },
  { name: "Explorateur", icon: <FolderIcon />, open: true },
  { name: "Store", icon: <StoreIcon /> },
  { name: "Empreinte", icon: <FingerIcon />, open: true },
  { name: "Xbox", icon: <XboxIcon /> },
  { name: "Chromium", icon: <ChromiumIcon />, open: true },
  { name: "Writer", icon: <WriterIcon />, open: true },
  { name: "Burp", icon: <BurpIcon />, open: true },
];

/* ---------- sections ---------- */

const BrowserChrome = () => (
  <>
    <TabStrip>
      <TabActions>
        <IconButton aria-label="Onglets">
          <svg width="14" height="14" viewBox="0 0 14 14" fill="none" stroke="#111" strokeWidth="1.300">
            <rect x=".7" y=".7" width="12.600" height="12.600" rx="2" /><path d="M1 3h12" strokeWidth="2.600" /><path d="M4.500 4v9" />
          </svg>
        </IconButton>
      </TabActions>
      <TabList>
        {tabs.map((t, i) => (
          <TabItem key={i} $active={t.active} $plain={t.plain} $recent={t.recent}>
            <TabIcon $faded={t.faded}>{t.icon}</TabIcon>
            {t.sound && <TabSound><SoundIcon s={17} /></TabSound>}
            <TabTitle $faded={t.faded} $sound={t.sound}>{t.title}</TabTitle>
            <IconButton aria-label="Fermer l'onglet" $w={14}><Cross s={9} /></IconButton>
          </TabItem>
        ))}
      </TabList>
      <WindowControls>
        <IconButton $w={34} $h={32} aria-label="Nouvel onglet"><Stroke s={14} w={1.2}><path d="M8 1v14M1 8h14" /></Stroke></IconButton>
        <ControlSpacer />
        <IconButton $w={46} $h={32} aria-label="Réduire"><Stroke s={10} w={1.5}><path d="M0 8h16" /></Stroke></IconButton>
        <IconButton $w={46} $h={32} aria-label="Restaurer">
          <Stroke s={10} w={1.1} vb={11}><rect x=".6" y="2.500" width="7.500" height="7.500" rx="1.500" /><path d="M3 .7h5a2 2 0 0 1 2 2v5" /></Stroke>
        </IconButton>
        <IconButton $w={46} $h={32} aria-label="Fermer"><Cross s={12} w={1} /></IconButton>
      </WindowControls>
    </TabStrip>
    <Toolbar>
      <NavButtons>
        <IconButton $w={44} $h={30} aria-label="Retour"><Stroke s={18} w={1.2} vb={18}><path d="M17 9H1.500M8.500 2L1.500 9l7 7" /></Stroke></IconButton>
        <IconButton $w={44} $h={30} aria-label="Suivant"><Stroke s={18} w={1.2} vb={18}><path d="M1 9h15.500M9.500 2l7 7-7 7" /></Stroke></IconButton>
        <IconButton $w={44} $h={30} aria-label="Actualiser"><Stroke s={18} w={1.3} vb={18}><path d="M15.500 5.500A7.500 7.500 0 1 0 16.500 9M16 1v5h-5" /></Stroke></IconButton>
      </NavButtons>
      <AddressBar>
        <Stroke s={18} w={1.2} vb={18} stroke="#555"><rect x="3" y="6.500" width="12" height="9.500" rx="1.500" /><path d="M6 6.500V4.500a3 3 0 0 1 6 0v2" /><circle cx="9" cy="11.300" r=".6" fill="#555" /></Stroke>
        <AddressInput aria-label="Adresse" defaultValue="https://modeles-cv.fr/builder/resume/02950cff-0678-422f-a47e-65e08114c32f/preview" />
        <IconButton $w={36} $h={30} $color="#707070" aria-label="Lire à haute voix">
          <Stroke s={18} w={1.1} vb={18}><path d="M1.500 15.500L6.500 3l5 12.500M3.200 11.500h6.600M11.500 4c1 1.300 1 2.700.3 4M14 2.500c1.500 2.300 1.500 4.700.3 7" /></Stroke>
        </IconButton>
        <IconButton $w={36} $h={30} $color="#707070" aria-label="Traduire">
          <Stroke s={18} w={1.1} vb={18}><path d="M1.500 6c1.500-1.200 5-1 5 1.500v5M6.500 8.500c-3 0-5.200.5-5.200 2.300 0 2.400 4.500 2.200 5.200-.3M10 6h6.500M12.500 4c-.3 3-.3 6 .5 8.500M15.500 7.500c-.8 3-2.800 4.700-4.500 4.700-2 0-1.300-3.800 2.500-3.800 4 0 3.800 3.800 1.200 4.300" /></Stroke>
        </IconButton>
        <IconButton $w={36} $h={30} $color="#707070" aria-label="Ajouter aux favoris">
          <Stroke s={18} w={1.2} vb={18}><path d="M6 15.500l-2 .8.800-5L1 7.500l5-.8L8.300 2l2.300 4.700 5 .8-1 1" /><circle cx="12.800" cy="12.800" r="4" fill="#707070" /><path d="M12.800 10.800v4M10.800 12.800h4" stroke="#fff" /></Stroke>
        </IconButton>
      </AddressBar>
      <ToolbarActions>
        <IconButton $w={44} $h={30} aria-label="Extensions">
          <Stroke s={18} w={1.3} vb={18}><path d="M3 4h3.500a2.300 2.300 0 0 1 4.500 0h4v4a2 2 0 0 0 0 3.700V16h-4a2.200 2.200 0 0 0-4.300 0H3.500v-3.800a2.300 2.300 0 1 1-.5-4.400z" transform="translate(.3 -.6)" /></Stroke>
        </IconButton>
        <ToolbarDivider />
        <IconButton $w={44} $h={30} aria-label="Favoris">
          <Stroke s={18} w={1.2} vb={18}><path d="M10 5.500L8 2 5.800 6.500 1 7.300l3.500 3.500-1 5L7.500 13.500M11.500 6.500H17M10.500 10H17M10.500 13.500H17" /></Stroke>
        </IconButton>
        <IconButton $w={44} $h={30} aria-label="Collections">
          <Stroke s={18} w={1.2} vb={18}><rect x="6.500" y="5.500" width="11" height="11" rx="2" /><path d="M12 8.300v5.400M9.300 11h5.400M4 12.500c-1-.3-1.300-1-1.500-2L1.200 5c-.2-1 .3-2 1.500-2.300l7-1.500c1-.2 1.800.2 2.200 1.300" /></Stroke>
        </IconButton>
        <IconButton $w={48} $h={30} aria-label="Profil">
          <svg width="23" height="23" viewBox="0 0 23 23"><circle cx="11.500" cy="11.500" r="11.300" fill="#d2d0ce" /><circle cx="11.500" cy="8.300" r="5" fill="#908b88" /><path d="M4.200 17.500c0-2 2.300-3 7.300-3s7.300 1 7.300 3a10 10 0 0 1-14.600 2z" fill="#908b88" /></svg>
        </IconButton>
        <IconButton $w={46} $h={30} aria-label="Paramètres et plus">
          <svg width="14" height="4" viewBox="0 0 14 4"><circle cx="2" cy="2" r="1.400" /><circle cx="7" cy="2" r="1.400" /><circle cx="12" cy="2" r="1.400" /></svg>
        </IconButton>
      </ToolbarActions>
    </Toolbar>
  </>
);

const ResumePreview = () => (
  <Resume>
    <ResumeHeader>
      <Initials>D|J</Initials>
      <Name>DIMITRI JACQUART</Name>
      <RoleRow><Role>SERVICE CVIQUE</Role></RoleRow>
      <Contacts>
        {contacts.map((c) => <Contact key={c.text}>{c.icon}<span>{c.text}</span></Contact>)}
      </Contacts>
    </ResumeHeader>
    <Columns>
      <Aside>
        <Education>
          <SectionTitle>ÉDUCATION</SectionTitle>
          <Degree>BACCALAURÉAT SCIENTIFIQUE</Degree>
          <School $after={37}>Lycée Victor Louis / Talence / 2018</School>
          <School $after={13}>BTS SIO / mulhouse</School>
          <p>en cour de deuxième année.</p>
        </Education>
        <section>
          <SectionTitle>CENTRES D'INTÉRÊT</SectionTitle>
          <Interests><li>Sportif De Haut Niveau ( Badminton ) : Pratiquant En Compétition Depuis 13 Ans Et Dans</li></Interests>
        </section>
      </Aside>
      <Main>
        <Intro>Bonjour je m'appelle Dimitri , étudiant de 22 ans , je cherche actuellement un moyen de financer mes études.Discipliné et ayant dejà travailler en équipe je suis prêt à vous apporter tout mon sérieux.</Intro>
        <SectionTitle>EXPÉRIENCES PROFESSIONNELLES</SectionTitle>
        <Jobs>
          {jobs.map((j, i) => (
            <Job key={j.title}>
              <JobMeta>
                <Company>{j.company}</Company>
                <p>{j.dates}</p>
                <p>{j.place}</p>
              </JobMeta>
              <Rail><RailLine $lead $hidden={i === 0} /><RailDot /><RailLine /></Rail>
              <JobBody>
                <JobTitle>{j.title}</JobTitle>
                {j.lines.map((l) => <p key={l}>{l}</p>)}
              </JobBody>
            </Job>
          ))}
        </Jobs>
      </Main>
    </Columns>
  </Resume>
);

export default function App() {
  return (
    <Screen>
      <GlobalStyle />
      <BrowserChrome />
      <Middle>
        <Page>
          <AppHeader>
            <Brand href="#accueil"><LogoIcon s={23} ink="#0e121b" />Modeles-CV</Brand>
            <Controls>
              <ColorButton>Couleur<Swatch /></ColorButton>
              <ControlDivider />
              <SelectBox>
                <TemplateSelect aria-label="Modèle" defaultValue="Riga"><option>Riga</option></TemplateSelect>
                <Stroke s={14} w={2} vb={14} stroke="#0d97dd"><path d="M2 4l5 5.500L12 4" /></Stroke>
              </SelectBox>
              <DownloadButton>TÉLÉCHARGER</DownloadButton>
            </Controls>
            <CloseBox><IconButton $color="#fff" aria-label="Fermer l'aperçu"><Cross s={15} w={1.7} /></IconButton></CloseBox>
          </AppHeader>
          <Scroller>
            <Canvas><ResumePreview /></Canvas>
            <ScrollTrack><ScrollThumb /></ScrollTrack>
          </Scroller>
          <BoltButton aria-label="Actions rapides">
            <svg width="28" height="44" viewBox="0 0 28 44"><path d="M17 0L0 25.500h11.500V43L28 17H17z" fill="#f7cd05" /></svg>
          </BoltButton>
        </Page>
        <SidePanel>
          {sideTools.map(([name, icon]) => <IconButton key={name} $w={42} $h={42} aria-label={name}>{icon}</IconButton>)}
          <IconButton $w={42} $h={48} aria-label="Ajouter"><Stroke s={14} w={1.1}><path d="M8 1v14M1 8h14" /></Stroke></IconButton>
          <PanelDivider />
          <IconButton $w={42} $h={42} aria-label="Masquer le volet">
            <Stroke s={18} w={1.4} vb={18}><rect x="1" y="3" width="16" height="12" rx="1.500" /><path d="M12 3v12M3.500 9h5M6.500 7l2 2-2 2" /></Stroke>
          </IconButton>
          <IconButton $w={42} $h={42} aria-label="Paramètres">
            <Stroke s={18} w={1.3} vb={18}><circle cx="9" cy="9" r="2.300" /><path d="M7.500 1h3l.5 2.500 1.700 1 2.400-.9 1.500 2.600-1.900 1.700v2.200l1.900 1.700-1.500 2.600-2.400-.9-1.700 1-.5 2.500h-3L7 14.500l-1.700-1-2.400.9-1.500-2.600 1.900-1.700V7.900L1.400 6.200l1.500-2.600 2.400.9 1.700-1z" /></Stroke>
          </IconButton>
        </SidePanel>
      </Middle>
      <Taskbar>
        <Weather><WeatherIcon /><span>10°C<Muted>Eclaircies</Muted></span></Weather>
        <Apps>
          <AppCell aria-label="Démarrer"><WindowsIcon /></AppCell>
          <SearchPill>
            <Stroke s={15} w={1.4}><circle cx="9.500" cy="6.500" r="5" /><path d="M6 10.500L1.500 15" /></Stroke>Recherche
          </SearchPill>
          {apps.map((a) => <AppCell key={a.name} aria-label={a.name} $active={a.active} $open={a.open}>{a.icon}</AppCell>)}
        </Apps>
        <Tray>
          <TrayGroup>
            <Stroke s={18} w={1.3} vb={18}><path d="M4 11.500l5-5 5 5" /></Stroke>
            <Stroke s={18} w={1.3} vb={18}><path d="M5 14a3.300 3.300 0 0 1-.3-6.500A4.500 4.500 0 0 1 13 6.800 3.700 3.700 0 0 1 13.500 14z" fill="#b9afad" /></Stroke>
          </TrayGroup>
          <Stroke s={18} w={1.3} vb={18}><path d="M1.500 7.500a11 11 0 0 1 15 0M4 10.200a7.300 7.300 0 0 1 10 0M6.300 12.700a4 4 0 0 1 5.400 0" /><circle cx="9" cy="15" r=".8" fill="#1b1b1b" /></Stroke>
          <SoundIcon s={18} />
          <Stroke s={18} w={1.2} vb={18}><path d="M6.500 5H15v9H5M16.500 8v3" /><path d="M1.500 5.500v2h4v-2zM2.300 5V3M4.700 5V3M3.500 8v6" fill="#1b1b1b" /></Stroke>
          <Clock>15:46<br />20/12/2022</Clock>
          <Badge>3</Badge>
        </Tray>
      </Taskbar>
    </Screen>
  );
}
